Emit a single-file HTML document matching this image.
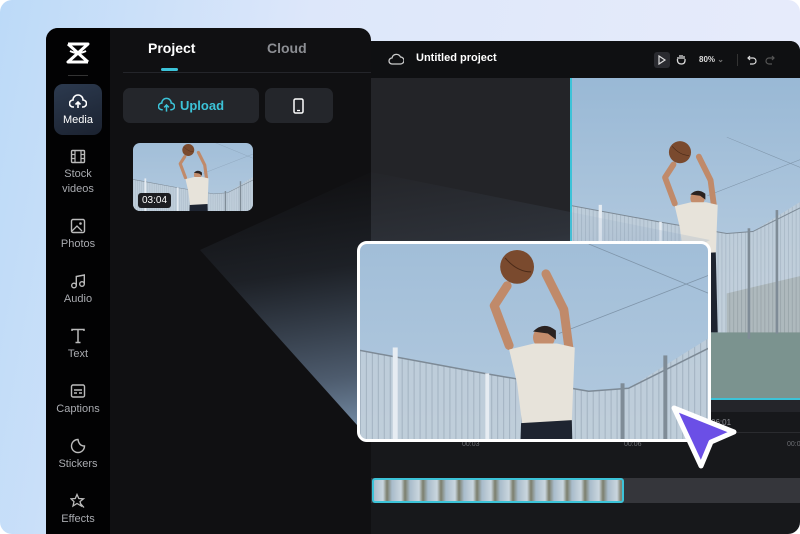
<!DOCTYPE html>
<html><head><meta charset="utf-8"><style>
*{margin:0;padding:0;box-sizing:border-box}
html,body{width:800px;height:534px;overflow:hidden}
body{font-family:"Liberation Sans",sans-serif;background:#fff;position:relative}
#bg{position:absolute;left:0;top:0;width:800px;height:534px;border-radius:12px;overflow:hidden;background:linear-gradient(100deg,#bcdaf8 0%,#dde7fa 35%,#e8ecfb 100%)}
.abs{position:absolute}
#left{left:46px;top:28px;width:325px;height:506px;background:#101012;border-radius:12px 12px 0 0;overflow:hidden}
#side{left:0;top:0;width:64px;height:506px;background:#020203}
.it{position:absolute;left:0;width:64px;text-align:center;color:#a9abb0;font-size:11px;line-height:15px}
.it svg{display:block;margin:0 auto 3px}
#right{left:371px;top:41px;width:429px;height:493px;background:#17181b;border-radius:0 10px 0 0;overflow:hidden}
</style></head><body>
<div id="bg">
<svg width="0" height="0" style="position:absolute;left:0;top:0">
<defs>
<linearGradient id="sky" x1="0" y1="0" x2="0" y2="1"><stop offset="0" stop-color="#8fb2d2"/><stop offset="1" stop-color="#cfdce8"/></linearGradient>
<pattern id="mesh" width="6" height="10" patternUnits="userSpaceOnUse"><rect width="6" height="10" fill="#c3cfd9"/><rect width="1" height="10" fill="#9eabb7"/></pattern>
<linearGradient id="beam" x1="0.25" y1="0" x2="0.55" y2="1"><stop offset="0" stop-color="#7d99bb" stop-opacity="0"/><stop offset="0.35" stop-color="#7d99bb" stop-opacity="0.12"/><stop offset="0.75" stop-color="#8aa6c8" stop-opacity="0.5"/><stop offset="1" stop-color="#a9cdf0" stop-opacity="0.75"/></linearGradient>
<g id="scene">
<rect x="-200" y="-200" width="800" height="700" fill="url(#sky)"/>
<path d="M-30 300 L400 300 L400 420 L-30 420Z" fill="#7b938f"/>
<path d="M230 240 L400 200 L400 300 L230 300Z" fill="#6f7567"/>
<path d="M-200 70 L125 130 L230 148 L230 300 L-200 300Z" fill="url(#mesh)" opacity=".75"/>
<path d="M230 148 L270 145 L350 95 L400 80 L400 300 L230 300Z" fill="url(#mesh)" opacity=".75"/>
<path d="M-200 70 L125 130 L230 148 L270 145 L400 80" stroke="#7d8a96" stroke-width="1.5" fill="none"/>
<rect x="33" y="104" width="5" height="200" fill="#e6ecf2"/>
<rect x="126" y="130" width="4" height="180" fill="#e6ecf2"/>
<rect x="262" y="140" width="4" height="170" fill="#7f8c97"/>
<rect x="305" y="112" width="4" height="190" fill="#7f8c97"/>
<line x1="230" y1="0" x2="400" y2="70" stroke="#7f95aa" stroke-width=".8"/>
<line x1="200" y1="90" x2="380" y2="20" stroke="#7f95aa" stroke-width=".8"/>
<path d="M150 102 L135 62 L148 42" stroke="#c08a6a" stroke-width="9" fill="none" stroke-linecap="round" stroke-linejoin="round"/>
<path d="M210 104 L205 66 L187 30" stroke="#c08a6a" stroke-width="9" fill="none" stroke-linecap="round" stroke-linejoin="round"/>
<circle cx="158" cy="23" r="17" fill="#7a4a2e"/>
<path d="M146 14 Q158 28 172 28" stroke="#4a2a18" fill="none"/>
<circle cx="185" cy="94" r="11" fill="#c48d6c"/>
<path d="M174 88 Q185 77 197 87 L197 96 L189 90Z" fill="#2a2220"/>
<path d="M150 106 L175 100 L198 100 L216 104 L213 178 L163 180 L158 140Z" fill="#e7e3da"/>
<path d="M162 180 L213 177 L216 300 L158 300Z" fill="#1e2430"/>
</g>
</defs></svg>

<div id="left" class="abs">
 <div id="side" class="abs">
  <svg class="abs" style="left:20px;top:14px" width="24" height="22" viewBox="0 0 24 22"><path d="M2 2 L22 2 L2 20 L22 20 M2 2 L22 20" stroke="#fff" stroke-width="3" fill="none" stroke-linejoin="round"/><path d="M4 9 Q12 13 20 9" stroke="#fff" stroke-width="2" fill="none"/></svg>
  <div class="abs" style="left:22px;top:47px;width:20px;height:1px;background:#333"></div>
  <div class="abs" style="left:8px;top:56px;width:48px;height:51px;border-radius:9px;background:linear-gradient(160deg,#2c3a4f,#1b2230)"></div>
  <div class="it" style="top:66px;color:#fff"><svg width="18" height="16" viewBox="0 0 18 16"><path d="M5 13 H4 a3.5 3.5 0 0 1 0-7 a5 5 0 0 1 10 0 a3.5 3.5 0 0 1 0 7 H13 M9 14 V8 M6.5 10.5 L9 8 L11.5 10.5" stroke="#fff" stroke-width="1.6" fill="none"/></svg>Media</div>
  <div class="it" style="top:121px"><svg width="16" height="15" viewBox="0 0 16 15"><rect x="1.5" y="1.5" width="13" height="12" rx="1" stroke="#bbb" stroke-width="1.4" fill="none"/><path d="M5 1.5 V13.5 M11 1.5 V13.5 M1.5 5.5 H5 M1.5 9.5 H5 M11 5.5 H14.5 M11 9.5 H14.5" stroke="#bbb" stroke-width="1.2"/></svg>Stock<br>videos</div>
  <div class="it" style="top:190px"><svg width="16" height="16" viewBox="0 0 16 16"><rect x="1.5" y="1.5" width="13" height="13" rx="1.5" stroke="#bbb" stroke-width="1.4" fill="none"/><path d="M2 13 L7 8 L12 13" stroke="#bbb" stroke-width="1.3" fill="none"/><circle cx="10.5" cy="5.5" r="1.3" fill="#bbb"/></svg>Photos</div>
  <div class="it" style="top:245px"><svg width="16" height="16" viewBox="0 0 16 16"><circle cx="4" cy="12.5" r="2.3" stroke="#bbb" stroke-width="1.4" fill="none"/><circle cx="12" cy="11" r="2.3" stroke="#bbb" stroke-width="1.4" fill="none"/><path d="M6.3 12.5 V3.5 L14.3 2 V11" stroke="#bbb" stroke-width="1.4" fill="none"/></svg>Audio</div>
  <div class="it" style="top:300px"><svg width="16" height="16" viewBox="0 0 16 16"><path d="M2 3 V1.5 H14 V3 M8 1.5 V14.5 M5.5 14.5 H10.5" stroke="#bbb" stroke-width="1.5" fill="none"/></svg>Text</div>
  <div class="it" style="top:355px"><svg width="16" height="16" viewBox="0 0 16 16"><rect x="1.5" y="2" width="13" height="12" rx="1.5" stroke="#bbb" stroke-width="1.4" fill="none"/><path d="M4 7 H12 M4 10 H7 M9 10 H12" stroke="#bbb" stroke-width="1.4"/></svg>Captions</div>
  <div class="it" style="top:410px"><svg width="16" height="16" viewBox="0 0 16 16"><path d="M8 1.5 A6.5 6.5 0 1 0 14.5 8 Q9 8 8 1.5Z" stroke="#bbb" stroke-width="1.4" fill="none"/></svg>Stickers</div>
  <div class="it" style="top:465px"><svg width="16" height="16" viewBox="0 0 16 16"><path d="M7 1.5 L8.8 5.5 L13.5 5.8 L10 8.6 L11.3 13 L7 10.5 L3 13 L4 8.6 L1 5.8 L5.3 5.5Z M10 10 L14 14.5" stroke="#bbb" stroke-width="1.3" fill="none"/></svg>Effects</div>
 </div>
 <div class="abs" style="left:102px;top:12px;color:#fff;font-weight:bold;font-size:14px">Project</div>
 <div class="abs" style="left:221px;top:12px;color:#8c8e93;font-weight:bold;font-size:14px">Cloud</div>
 <div class="abs" style="left:77px;top:44px;width:265px;height:1px;background:#24252a"></div>
 <div class="abs" style="left:115px;top:40px;width:17px;height:3px;border-radius:2px;background:#3cc3d8"></div>
 <div class="abs" style="left:77px;top:60px;width:136px;height:35px;border-radius:7px;background:#24262b;color:#3cc3d8;font-weight:bold;font-size:13px;line-height:35px;text-align:center"><svg width="17" height="16" viewBox="0 0 18 16" style="vertical-align:-3px;margin-right:5px"><path d="M5 13 H4 a3.5 3.5 0 0 1 0-7 a5 5 0 0 1 10 0 a3.5 3.5 0 0 1 0 7 H13 M9 15 V8 M6.5 10.5 L9 8 L11.5 10.5" stroke="#3cc3d8" stroke-width="1.6" fill="none"/></svg>Upload</div>
 <div class="abs" style="left:219px;top:60px;width:68px;height:35px;border-radius:7px;background:#24262b"><svg class="abs" style="left:28px;top:10px" width="11" height="16" viewBox="0 0 11 16"><rect x="1" y="1" width="9" height="14" rx="1.5" stroke="#fff" stroke-width="1.5" fill="none"/><path d="M4 12.5 H7" stroke="#fff" stroke-width="1.3"/></svg></div>
 <div class="abs" style="left:87px;top:115px;width:120px;height:68px;border-radius:7px;overflow:hidden"><svg width="120" height="68" viewBox="0 3 343 194" preserveAspectRatio="xMidYMid slice"><use href="#scene"/></svg>
  <div class="abs" style="left:5px;top:50px;background:#1d1e22;color:#fff;font-size:10px;padding:2px 4px;border-radius:3px">03:04</div></div>
</div>

<div id="right" class="abs">
 <div class="abs" style="left:0;top:0;width:429px;height:37px;background:#0f1012"></div>
 <svg class="abs" style="left:17px;top:11px" width="16" height="14" viewBox="0 0 16 14"><path d="M4 12 a3 3 0 0 1 0-6 a4.5 4.5 0 0 1 8.5-1 a3.5 3.5 0 0 1 0 7Z" stroke="#ccc" stroke-width="1.3" fill="none"/></svg>
 <div class="abs" style="left:45px;top:11px;color:#fff;font-weight:bold;font-size:11px">Untitled project</div>
 <div class="abs" style="left:283px;top:11px;width:16px;height:16px;border-radius:3px;background:#2a2b30"></div>
 <svg class="abs" style="left:286px;top:14px" width="10" height="10" viewBox="0 0 10 10"><path d="M2 1 L8 5 L2 9Z" stroke="#ddd" stroke-width="1.2" fill="none"/></svg>
 <svg class="abs" style="left:305px;top:12px" width="11" height="12" viewBox="0 0 11 12"><path d="M2 6 V4 M4 6 V2 M6 6 V2 M8 6 V3 M1.5 6 Q1 11 5.5 11 Q9.5 11 9 6" stroke="#ddd" stroke-width="1.3" fill="none"/></svg>
 <div class="abs" style="left:328px;top:14px;color:#ddd;font-size:8px;font-weight:bold">80% <span style="color:#777">⌄</span></div>
 <div class="abs" style="left:366px;top:13px;width:1px;height:12px;background:#333"></div>
 <svg class="abs" style="left:376px;top:14px" width="10" height="10" viewBox="0 0 10 10"><path d="M3 1 L1 3 L3 5 M1 3 H6 a3 3 0 0 1 0 6 H3" stroke="#ddd" stroke-width="1.2" fill="none"/></svg>
 <svg class="abs" style="left:394px;top:14px" width="10" height="10" viewBox="0 0 10 10"><path d="M7 1 L9 3 L7 5 M9 3 H4 a3 3 0 0 0 0 6 H7" stroke="#555" stroke-width="1.2" fill="none"/></svg>
 <div class="abs" style="left:0;top:37px;width:199px;height:332px;background:#232428"></div>
 <div class="abs" style="left:199px;top:37px;width:230px;height:322px;border-left:2px solid #3cc3d8;border-bottom:2px solid #3cc3d8;overflow:hidden"><svg width="230" height="322" viewBox="-8 -91 354 495" preserveAspectRatio="xMinYMin slice"><use href="#scene"/></svg></div>
 <div class="abs" style="left:199px;top:359px;width:230px;height:12px;background:#24252a"></div>
 <div class="abs" style="left:340px;top:377px;color:#8d8f94;font-size:8px">06:01</div>
 <div class="abs" style="left:0;top:391px;width:429px;height:1px;background:#2a2b2f"></div>
 <div class="abs" style="left:91px;top:400px;color:#6d6f74;font-size:7px">00:03</div>
 <div class="abs" style="left:253px;top:400px;color:#6d6f74;font-size:7px">00:06</div>
 <div class="abs" style="left:416px;top:400px;color:#6d6f74;font-size:7px">00:0</div>
 <div class="abs" style="left:0;top:437px;width:429px;height:25px;background:#35363b"></div>
 <div class="abs" style="left:1px;top:437px;width:252px;height:25px;border:2px solid #3cc3d8;border-radius:3px;background:repeating-linear-gradient(90deg,#a9bccb 0,#cad6de 9px,#7b7e6c 13px,#a9bccb 18px)"></div>
</div>

<svg class="abs" style="left:0;top:0" width="800" height="534"><path d="M200 250 L371 172 L710 240 L357 425 Z" fill="url(#beam)"/></svg>

<div class="abs" style="left:357px;top:241px;width:354px;height:201px;border:3px solid #fff;border-radius:10px;overflow:hidden;background:#fff"><svg width="348" height="195" viewBox="0 0 350 196" preserveAspectRatio="xMidYMid slice"><use href="#scene"/></svg></div>

<svg class="abs" style="left:666px;top:400px" width="76" height="74" viewBox="0 0 76 74"><path d="M8 8 L68 32 L45 42 L35 66Z" fill="#6b4fe6" stroke="#fff" stroke-width="5" stroke-linejoin="round"/></svg>
</div>
</body></html>
